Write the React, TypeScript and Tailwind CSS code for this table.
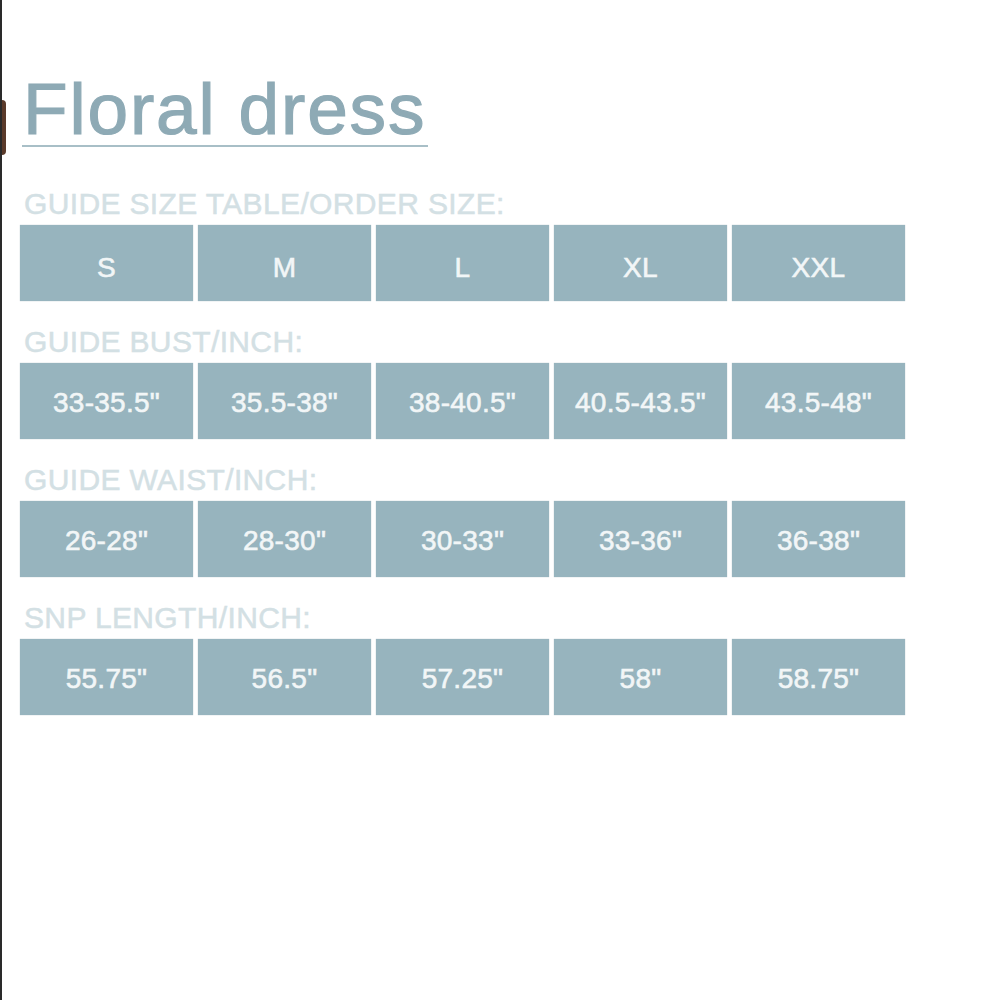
const sections: { label: string; values: string[] }[] = [
  { label: "GUIDE SIZE TABLE/ORDER SIZE:", values: ["S", "M", "L", "XL", "XXL"] },
  {
    label: "GUIDE BUST/INCH:",
    values: ['33-35.5"', '35.5-38"', '38-40.5"', '40.5-43.5"', '43.5-48"'],
  },
  {
    label: "GUIDE WAIST/INCH:",
    values: ['26-28"', '28-30"', '30-33"', '33-36"', '36-38"'],
  },
  {
    label: "SNP LENGTH/INCH:",
    values: ['55.75"', '56.5"', '57.25"', '58"', '58.75"'],
  },
];

export default function App() {
  return (
    <div
      className="relative min-h-[1000px] w-[1000px] bg-white border-l-2 border-[#2a2a2a]"
      style={{ fontFamily: '"Liberation Sans", Arial, sans-serif' }}
    >
      <div className="absolute left-0 top-[100px] h-[55px] w-[4px] rounded-r-full bg-[#5a3a2a]" />
      <div className="pl-[18px] pt-[72px]">
        <div className="w-fit">
          <h1 className="pl-[3px] text-[73px] leading-[73px] tracking-[0.025em] text-[#8eaab5] [-webkit-text-stroke:1.2px_#8eaab5]">
            Floral dress
          </h1>
          <div className="h-[2px] w-[406px] ml-[2px] bg-[#a8bfc7]" />
        </div>

        <div className="mt-[42px] flex flex-col gap-[26px]">
          {sections.map((s, i) => (
            <div key={s.label} className="flex flex-col">
              <div className="pl-[4px] text-[30px] leading-[30px] tracking-[0.012em] text-[#d3e0e4] [-webkit-text-stroke:0.5px_#d3e0e4]">
                {s.label}
              </div>
              <div className="mt-[6px] flex gap-[5px]">
                {s.values.map((v) => (
                  <div
                    key={v}
                    className={`flex h-[76px] w-[173px] items-center justify-center bg-[#97b4be] text-[28px] tracking-[0.01em] text-[#f2f6f7] [-webkit-text-stroke:0.6px_#f2f6f7] shadow-[0_0_1px_rgba(120,150,160,0.6)] ${
                      i === 0 ? "pt-[10px]" : "pt-[4px]"
                    }`}
                  >
                    {v}
                  </div>
                ))}
              </div>
            </div>
          ))}
        </div>
      </div>
    </div>
  );
}
